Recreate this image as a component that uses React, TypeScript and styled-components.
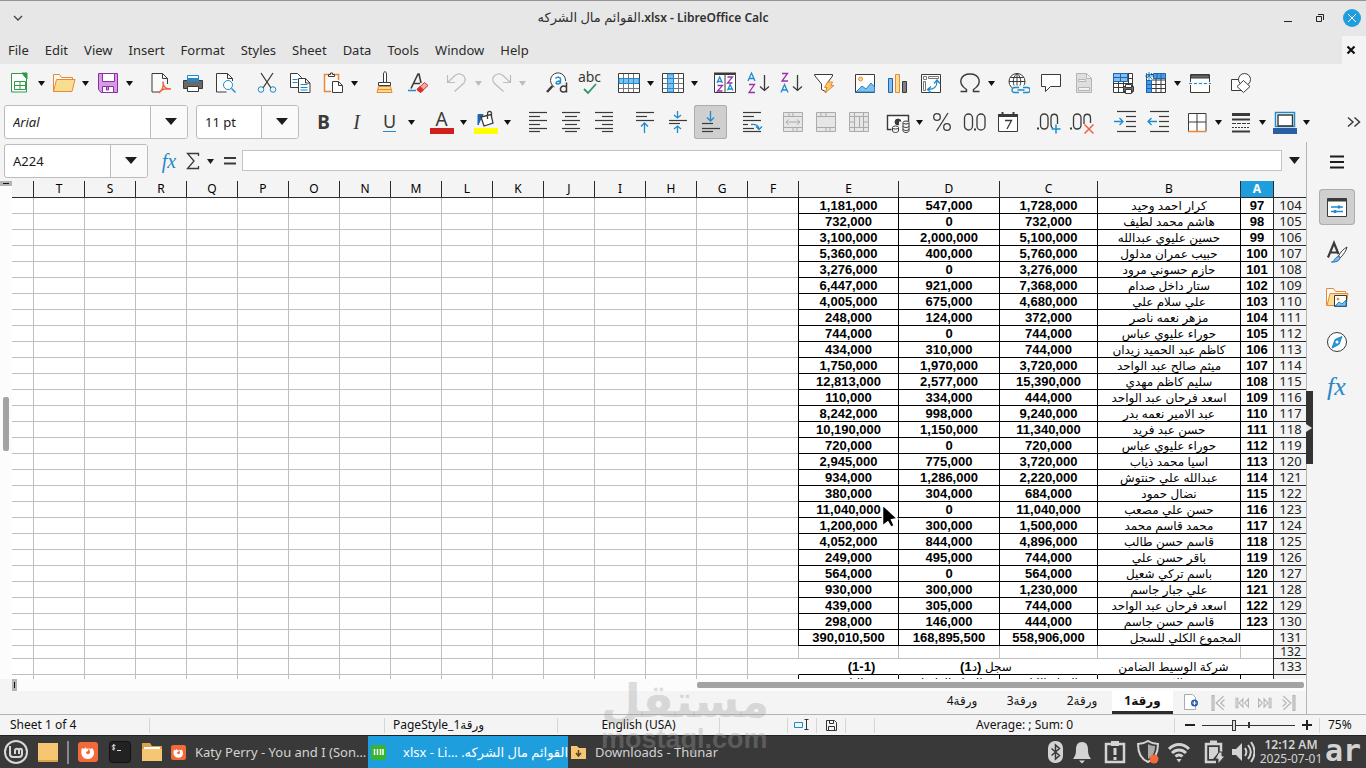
import React from 'react';
import styled, { createGlobalStyle, css } from 'styled-components';

const ui = `"Noto Sans", "DejaVu Sans", sans-serif`;
const INK = '#3a3a38';
const BLUE = '#1e8bcd';
const SKY = '#83beec';
const GREY = '#bdbdbd';
const ORANGE = '#ed8733';

const Global = createGlobalStyle`
  *, *::before, *::after { box-sizing: border-box; }
  body { margin: 0; background: #f4f4f4; color: #1c1c1c; font-family: ${ui}; font-size: 13px; }
  button, input { font: inherit; color: inherit; }
  button { margin: 0; padding: 0; border: 0; background: none; }
`;

/* ---------- icons ---------- */

type IconProps = { children: React.ReactNode; size?: number; color?: string };
const Icon = ({ children, size = 24, color = INK }: IconProps) => (
  <svg width={size} height={size} viewBox="0 0 24 24" fill="none" stroke={color} strokeWidth="1" aria-hidden="true">
    {children}
  </svg>
);

const alignLines = (rows: number[][]) => rows.map(([x, y, w]) => <path key={y} d={`M${x} ${y}.5h${w}`} strokeWidth="1.2" />);
const pageShape = 'M4.5 2.5h10l5 5v14h-15zM14.5 2.5v5h5';

const icons: Record<string, React.ReactNode> = {
  newSheet: (
    <Icon color="#2e9b48"><path d="M3.500 2.500h11l4 5v13.500h-15z" fill="#fff" /><path d="M14 2h5v6z" fill="#2e9b48" /><path d="M6.500 10.500h11v8h-11zM6.500 14.500h11M12 10.500v8" /></Icon>
  ),
  open: (
    <Icon color={ORANGE}><path d="M1.500 20.500V3.500h6l2 3h11v4" fill="#fafafa" /><path d="M1.500 20.500l3-12h18.500l-3 12z" fill="#f9dd91" /></Icon>
  ),
  save: (
    <Icon color="#8c2fa3"><path d="M2.500 2.500h19v19H5l-2.500-3z" fill="#d79ae6" /><path d="M6.500 2.500h12v8h-12z" fill="#fff" /><path d="M6.500 21.500v-6h11v6zM10.500 16v3h2v-3" fill="#fff" /></Icon>
  ),
  pdf: (
    <Icon><path d="M19.500 13V7.500l-5-5h-10.500v18.500h8M14.500 2.500v5h5" fill="#fafafa" /><path d="M15 10.500c1 5 0 8-4 11.500M15.500 14c2 4 4 4 7.500 4M12 20c3-2 7-2.500 10-2" stroke="#f0623c" strokeWidth="1.500" /></Icon>
  ),
  print: (
    <Icon><path d="M2.500 9.500h19v8h-19z" fill="#696969" /><path d="M6.500 10V4.500h11V10z" fill="#fff" stroke={BLUE} /><path d="M6 7h12v3H6z" fill={BLUE} stroke="none" /><path d="M6.500 15.500h11v5h-11z" fill="#fff" /></Icon>
  ),
  preview: (
    <Icon><path d="M18.500 10V7.500l-5-5H2.500v18.500h10M13.500 2.500v5h5" fill="#fafafa" /><circle cx="14" cy="14" r="4.500" stroke={BLUE} fill="#fff" /><path d="M17.500 17.500l4 4" stroke={BLUE} strokeWidth="1.500" /></Icon>
  ),
  cut: (
    <Icon><path d="M6 2l10 15M18 2L8 17" strokeWidth="1.300" /><circle cx="6" cy="18.500" r="2.800" stroke={BLUE} /><circle cx="18" cy="18.500" r="2.800" stroke={BLUE} /></Icon>
  ),
  copy: (
    <Icon><path d="M2.500 2.500h7l4 4v10h-11z" fill="#fff" /><path d="M4.500 8.500h5M4.500 11.500h5" stroke={BLUE} /><path d="M10.500 7.500h7l4.500 4.500v9.500H10.500zM17.500 7.500v4.500H22" fill="#fff" /><path d="M12.500 13.500h7M12.500 16.500h7M12.500 19h7" stroke={BLUE} /></Icon>
  ),
  paste: (
    <Icon><path d="M10 20.500H3.500v-17h14V9" fill="#fafafa" stroke={ORANGE} strokeWidth="1.500" /><path d="M7.500 5.500v-2h2v-1.500h2v1.500h2v2z" fill="#fff" /><path d="M11.500 10.500h6l4 4v7h-10zM17.500 10.500v4h4" fill="#fff" /></Icon>
  ),
  brush: (
    <Icon><path d="M10.500 11V3c0-3 3-3 3 0v8M5.500 11.500h12v3h-12z" fill="#fff" /><path d="M5.500 15.500h12l1.500 6H4zM5 18.500h13" fill="#f9dd91" stroke={ORANGE} /></Icon>
  ),
  clear: (
    <Icon><path d="M5 17.500L12 3h1l2 9M8 12.500h6" strokeWidth="1.600" /><path d="M2 19.500h8" stroke={BLUE} strokeWidth="1.500" /><path d="M11 18.500l7.500-7 3.500 3-7.500 7z" fill="#f2aaa5" stroke="#d6302a" /><path d="M11 18.500l3-3 3.500 3.500-3 2.500z" fill="#d6302a" stroke="#d6302a" /></Icon>
  ),
  undo: <Icon color={GREY}><path d="M2.500 4v7.500H10M3 11l7-6.500c5-4 13 1 9 7.500L9.500 20.500" strokeWidth="1.200" /></Icon>,
  redo: <Icon color={GREY}><path d="M21.500 4v7.500H14M21 11l-7-6.500C9 .500 1 5.500 5 12l9.500 8.500" strokeWidth="1.200" /></Icon>,
  find: (
    <Icon><path d="M20.500 10a7.500 7.500 0 1 0-11 6" fill="#fff" /><path d="M7.500 15L2 21" strokeWidth="2.500" /><path d="M10.500 7.500c1-2 5-1.500 5 .500v4.500M15.500 10c-4-.500-6 3-3 3s3-2 3-3" stroke={BLUE} strokeWidth="1.500" /><path d="M21.500 11.500v10M21.500 16c-5-2.500-6.500 1-6 3s4 3 6 .500" strokeWidth="1.500" /></Icon>
  ),
  rowTable: (
    <Icon><path d="M1.500 2.500h21v19h-21z" fill="#fff" /><path d="M6.500 3v18M11.500 3v18M16.500 3v18M2 17.500h20" stroke="#777" /><path d="M2 7.500h20v5H2z" fill={SKY} stroke={BLUE} /><path d="M6.500 8v4M11.500 8v4M16.500 8v4" stroke={BLUE} /></Icon>
  ),
  colTable: (
    <Icon><path d="M1.500 2.500h21v19h-21z" fill="#fff" /><path d="M2 7.500h20M2 12.500h20M2 17.500h20M17.500 3v18" stroke="#777" /><path d="M6.500 3h6v18h-6z" fill={SKY} stroke={BLUE} /><path d="M7 7.500h5M7 12.500h5M7 17.500h5" stroke={BLUE} /></Icon>
  ),
  sort: (
    <Icon><path d="M1.500 3.500h21v18h-21zM12 3v18" fill="#fff" /><path d="M1 2.500h22" strokeWidth="2" /><path d="M4 12l2.700-6 2.700 6M5 10.500h3.500M14.500 19.500l2.700-6 2.700 6M15.500 18h3.500" stroke={BLUE} strokeWidth="1.300" /><path d="M14.500 6h5l-5 6h5M4.500 14.500h5l-5 5.500h5" stroke="#9b2fae" strokeWidth="1.300" /></Icon>
  ),
  sortAsc: (
    <Icon><path d="M2 10l3.500-8L9 10M3 7.500h5" stroke={BLUE} strokeWidth="1.300" /><path d="M3 13.500h5.500L3 21.500h6" stroke="#9b2fae" strokeWidth="1.300" /><path d="M18.500 4v15.500M14 15.500l4.500 4 4.500-4" strokeWidth="1.300" /></Icon>
  ),
  sortDesc: (
    <Icon><path d="M3 2.500h5.500L3 10h6" stroke="#9b2fae" strokeWidth="1.300" /><path d="M2 21.500l3.500-8 3.500 8M3 19h5" stroke={BLUE} strokeWidth="1.300" /><path d="M18.500 4v15.500M14 15.500l4.500 4 4.500-4" strokeWidth="1.300" /></Icon>
  ),
  filter: (
    <Icon><path d="M2.500 3.500h18v1.500l-6 8V21l-5-2.500V13L3 5z" fill="#fff" /><path d="M15.500 11h5l-1.500 3.500h3L13 22l2-5.500h-2.500z" fill="#f9c96a" stroke={ORANGE} /></Icon>
  ),
  image: (
    <Icon><path d="M2.500 3.500h19v18h-19z" fill="#fff" /><circle cx="7.500" cy="8" r="2" fill="#f9dd91" stroke={ORANGE} /><path d="M3 21l6-6 4 3 5-6 3.500 4v5z" fill={SKY} stroke={BLUE} /></Icon>
  ),
  chart: (
    <Icon><path d="M2.500 7.500h4v14h-4z" fill={SKY} stroke="#1b66b2" /><path d="M9.500 3.500h4v18h-4z" fill="#f9dd91" stroke={ORANGE} /><path d="M16.500 10.500h4v11h-4z" fill="#808080" /></Icon>
  ),
  pivot: (
    <Icon><path d="M2.500 3.500h19v18h-19z" fill="#fff" /><path d="M4.500 5.500h3v3h-3zM9.500 5.500h10v2h-10zM4.500 10.500h2v9h-2z" stroke="#777" /><path d="M9 18.500c7 0 9-3 9-8.500M12 15.500l-3.500 3 3.500 3M15 12.500l3-3.500 3 3.500" stroke={BLUE} strokeWidth="1.300" /></Icon>
  ),
  omega: <Icon><path d="M2.500 20.500h6v-2C-1.500 12 3 3 12 3s13.500 9 3.500 15.500v2h6" strokeWidth="1.400" /></Icon>,
  link: (
    <Icon><circle cx="11" cy="10.500" r="8" fill="#fff" /><path d="M3 10.500h16M4.500 6.500h13M11 2.500v16M11 2.500c-5 4-5 12 0 16M11 2.500c5 4 5 12 0 16" /><path d="M6 14.500h18v8H6z" fill="#f4f4f4" stroke="none" /><path d="M13 21.500H8.500a2.500 2.500 0 0 1 0-5H13M17 16.500h4.500a2.500 2.500 0 0 1 0 5H17M11.500 19h7" stroke={BLUE} strokeWidth="1.300" /></Icon>
  ),
  comment: <Icon><path d="M2.500 3.500h19v12h-10l-5 5v-5h-4z" fill="#fff" /></Icon>,
  headerFooter: (
    <Icon color="#b5b5b5"><path d={pageShape} fill="#dedede" /><path d="M6.500 8.500h7v2h-7zM6.500 16.500h11v3h-11z" fill="#f2f2f2" /></Icon>
  ),
  printArea: (
    <Icon><path d="M2.500 2.500h19v19h-19zM2.500 12.500h19M2.500 16.500h19M7.500 3v18M12.500 3v18M17.500 3v18M17 7.500h4" fill="#fff" /><path d="M2.500 2.500h14v8h-14zM9.500 3v7M3 6.500h13" fill={SKY} stroke="#1b66b2" /><path d="M12.500 15.500h10v5h-10z" fill="#696969" /><path d="M14.500 13.500h6v3h-6zM14.500 18.500h6v4h-6z" fill="#fff" stroke={INK} /></Icon>
  ),
  freeze: (
    <Icon><path d="M2.500 3.500h19v18h-19zM7.500 9h14M7.500 13.500h14M7.500 17.500h14M12 8v13.500M17 8v13.500" fill="#fff" /><path d="M9.500 2.500h12v5h-12zM2.500 9.500h5v12h-5zM13 2.500v5M17 2.500v5M2.500 13.500h5M2.500 17.500h5" fill="#4a9be0" stroke="#1b66b2" /><path d="M5 1v8M1 5h8M2 2l6 6M8 2l-6 6" stroke={BLUE} /></Icon>
  ),
  split: (
    <Icon><path d="M2.500 3.500h19v18h-19z" fill="#fff" /><path d="M3 4h18v3H3z" fill="#696969" /><path d="M1 12.500h22" stroke="#f4f4f4" strokeWidth="3" /><path d="M1 12.500h22" stroke={BLUE} strokeDasharray="3 2" /></Icon>
  ),
  shapes: (
    <Icon><path d="M2.500 8.500h11v11h-11z" fill="#fff" /><circle cx="15.500" cy="8.500" r="6" fill="#fff" /><path d="M14.500 9.500l6.500 6-6.500 6-6.500-6z" fill="#fff" /></Icon>
  ),
  fill: (
    <Icon><path d="M4 15V4.500h5l-2 4z" fill="#1b66b2" stroke="#1b66b2" /><path d="M7 7l10-2.500 2 8.500-9 3zM13.500 9V4c0-3.500 4-3.500 4 0v3" fill="#fff" strokeWidth="1.300" /><path d="M0 18h24v6H0z" fill="#ffff00" stroke="none" /></Icon>
  ),
  left: <Icon>{alignLines([[3, 2, 18], [3, 6, 11], [3, 10, 18], [3, 14, 11], [3, 18, 18], [3, 21, 11]])}</Icon>,
  center: <Icon>{alignLines([[3, 2, 18], [6, 6, 12], [3, 10, 18], [6, 14, 12], [3, 18, 18], [6, 21, 12]])}</Icon>,
  right: <Icon>{alignLines([[3, 2, 18], [10, 6, 11], [3, 10, 18], [10, 14, 11], [3, 18, 18], [10, 21, 11]])}</Icon>,
  top: <Icon>{alignLines([[3, 2, 18], [3, 6, 11], [3, 10, 18]])}<path d="M11.500 23V13M8 16.500l3.500-3.500 3.500 3.500" stroke={BLUE} strokeWidth="1.300" /></Icon>,
  middle: <Icon>{alignLines([[3, 10, 18], [3, 13, 11]])}<path d="M11.500 1v7M8 5l3.500 3L15 5M11.500 23v-7M8 19l3.500-3 3.500 3" stroke={BLUE} strokeWidth="1.300" /></Icon>,
  bottom: <Icon>{alignLines([[3, 13, 11], [3, 18, 18], [3, 21, 11]])}<path d="M11.500 1v10M8 7.500l3.500 3.500L15 7.500" stroke={BLUE} strokeWidth="1.300" /></Icon>,
  wrap: <Icon>{alignLines([[3, 2, 18], [3, 6, 11], [3, 10, 18], [3, 14, 5], [3, 18, 11], [3, 21, 18]])}<path d="M11 14.500c5-.500 8 1 8 5M16 16.500l3 3 3-3" stroke={BLUE} strokeWidth="1.300" /></Icon>,
  merge: <Icon color="#ababab"><path d="M2.500 2.500h19v19h-19zM2.500 6.500h19M2.500 17.500h19M12 2.500v4M12 17.500v4M8 2.500v4M16 17.500v4M5 12h14M8 9.500L5 12l3 2.500M16 9.500l3 2.500-3 2.500" fill="#e6e6e6" /></Icon>,
  mergeCells: <Icon color="#ababab"><path d="M2.500 2.500h19v19h-19zM2.500 6.500h19M2.500 17.500h19M12 2.500v4M12 17.500v4M7 2.500v4M16 17.500v4" fill="#e6e6e6" /></Icon>,
  unmerge: <Icon color="#ababab"><path d="M2.500 2.500h19v19h-19zM2.500 6.500h19M2.500 17.500h19M7.500 2.500v19M12.500 6.500v11M16.500 2.500v19M2.500 12h5M16.500 12h5" fill="#e6e6e6" /></Icon>,
  currency: (
    <Icon><path d="M1.500 5.500h21v14h-21z" fill="#fff" strokeWidth="1.400" /><circle cx="12" cy="12" r="3" fill={INK} /><path d="M13 11.500h10.500v11H13zM5.500 15.500h8v7h-8z" fill="#f4f4f4" stroke="none" /><ellipse cx="9.500" cy="17.500" rx="3" ry="1.500" fill="#fff" /><ellipse cx="20" cy="12.500" rx="3" ry="1.500" /><path d="M6.500 18v3c1 2 5 2 6 0v-3M17 13v8c1 2 5 2 6 0v-8M17 16c1 2 5 2 6 0M17 19c1 2 5 2 6 0" /></Icon>
  ),
  percent: <Icon><circle cx="7" cy="7" r="3.300" strokeWidth="1.300" /><circle cx="17" cy="17" r="3.300" strokeWidth="1.300" /><path d="M18 3L6.500 21" strokeWidth="1.300" /></Icon>,
  number: <Icon><rect x="1.500" y="4" width="8" height="16" rx="4" strokeWidth="1.300" /><rect x="14" y="4" width="8" height="16" rx="4" strokeWidth="1.300" /><path d="M11 19.500h2" strokeWidth="2" /></Icon>,
  date: <Icon><path d="M2.500 4.500h19v17h-19z" fill="#fff" /><path d="M2 5.500h20" strokeWidth="3" /><path d="M6.500 2v3M17.500 2v3" strokeWidth="2" /><path d="M9 10.500h6.500L11 19" strokeWidth="1.300" /></Icon>,
  addDecimal: <Icon><rect x="3.500" y="4" width="7.500" height="15" rx="3.700" strokeWidth="1.300" /><path d="M20.500 14V8c0-5-6.500-5-6.500 0v7c0 2 1 3 2 3.500" strokeWidth="1.300" /><path d="M0 18.500h2" strokeWidth="2" /><path d="M19 14.500v9M14.500 19h9" stroke={BLUE} strokeWidth="1.500" /></Icon>,
  delDecimal: <Icon><rect x="3.500" y="4" width="7.500" height="15" rx="3.700" strokeWidth="1.300" /><path d="M20.500 13V8c0-5-6.500-5-6.500 0v6" strokeWidth="1.300" /><path d="M0 18.500h2" strokeWidth="2" /><path d="M14.500 14.500l9 9M23.500 14.500l-9 9" stroke="#f0623c" strokeWidth="1.500" /></Icon>,
  indent: <Icon>{alignLines([[4, 1, 19], [13, 6, 10], [13, 11, 10], [13, 16, 10], [4, 21, 19]])}<path d="M1 11.500h9M6.500 8l3.500 3.500L6.500 15" stroke={BLUE} strokeWidth="1.300" /></Icon>,
  outdent: <Icon>{alignLines([[4, 1, 19], [13, 6, 10], [13, 11, 10], [13, 16, 10], [4, 21, 19]])}<path d="M11 11.500H2M5.500 8L2 11.500 5.500 15" stroke={BLUE} strokeWidth="1.300" /></Icon>,
  borders: <Icon><path d="M3.500 21V3.500h17.500V21M12 3.500v18M3.500 12h17.500" fill="#fff" /><path d="M3 21.500h18.500" stroke={ORANGE} strokeWidth="1.500" /></Icon>,
  lineStyle: <Icon><path d="M3 4.500h18" strokeWidth="3" /><path d="M3 9.500h18" strokeWidth="2" /><path d="M3 13.500h18" strokeDasharray="4 1" /><path d="M3 17.500h18" strokeDasharray="2 1" /><path d="M3 21.500h18" strokeWidth="2" /></Icon>,
  borderColor: <Icon><path d="M2.500 2.500h19v14h-19z" fill="#fff" stroke={BLUE} strokeWidth="1.500" /><path d="M5 5h14.500v11H5z" strokeWidth="1.400" /><path d="M0 18h24v6H0z" fill="#2a5fa5" stroke="none" /></Icon>,
  more: <Icon><path d="M6 7.500l5 4.500-5 4.500M12.500 7.500l5 4.500-5 4.500" strokeWidth="1.500" /></Icon>,
  sigma: <Icon><path d="M17.500 7V4.500H6.500l6.500 7.500-6.500 7.500h11V17" strokeWidth="1.300" /></Icon>,
  equals: <Icon><path d="M6 9h12M6 14.500h12" strokeWidth="2" /></Icon>,
  menu: <Icon color="#1c1c1c"><path d="M5 6.500h14M5 12h14M5 17.500h14" strokeWidth="2" /></Icon>,
  properties: <Icon><path d="M2.500 3.500h19v18h-19z" fill="#fff" /><path d="M2.500 5h19" strokeWidth="3" /><path d="M6 12h12M6 16.500h12" stroke={BLUE} strokeWidth="1.300" /><path d="M14 10.500v3M10 15v3" stroke={BLUE} strokeWidth="2.500" /></Icon>,
  styles: <Icon><path d="M3 17.500L9 3l4.500 11M5 12.500h8" strokeWidth="2.200" /><path d="M13.500 16c2-4 5-7 8.500-9-1 4-3 7-6.500 10.500z" fill="#fff" /><path d="M6.500 22c3 .500 3-5 7-5.500 3 1 1 6-7 5.500z" fill={SKY} stroke="#1b66b2" /></Icon>,
  gallery: <Icon color={ORANGE}><path d="M1.500 20.500V3.500h7l2 3h10v3" fill="#fff" /><path d="M2 20.500l3-12h18l-2 12z" fill="#f9dd91" /><path d="M9.500 10.500h12v11h-12z" fill="#fff" stroke={INK} /><path d="M10 21l4-4 3 2 4-4v6z" fill={SKY} stroke={BLUE} /><circle cx="13" cy="14" r="1" fill={ORANGE} /></Icon>,
  navigator: <Icon><circle cx="12" cy="12" r="9.500" fill="#fff" /><path d="M17 6.500l-3 8-7 3.500 3-8.500z" fill="#3193dc" stroke={BLUE} /><circle cx="12" cy="12" r="1.500" fill="#fff" stroke="none" /></Icon>,
};

const Caret = ({ color = '#1c1c1c', w = 7 }: { color?: string; w?: number }) => (
  <svg width={w} height={w > 8 ? 7 : 5} viewBox="0 0 8 5" preserveAspectRatio="none" aria-hidden="true"><path d="M0 0h8L4 5z" fill={color} /></svg>
);

/* ---------- window frame ---------- */

const Window = styled.div`
  display: flex;
  flex-direction: column;
  position: relative;
  height: 100vh;
  overflow: hidden;
`;
const TitleBar = styled.header`
  display: flex;
  align-items: center;
  flex: none;
  height: 36px;
  padding: 0 5px 2px 9px;
  border-top: 1px solid #949494;
  background: #e7e7e7;
`;
const Title = styled.h1`
  flex: 1;
  margin: 0;
  text-align: center;
  font-size: 12px;
  font-weight: 600;
  line-height: 20px;
  color: #303030;
`;
const TitleArabic = styled.span`
  font-size: 13px;
  font-weight: 400;
`;
const WindowControls = styled.div`
  display: flex;
  align-items: center;
  gap: 14px;
`;
const RoundButton = styled.button<{ $close?: boolean }>`
  display: grid;
  place-items: center;
  width: 18px;
  height: 18px;
  border-radius: 9px;
  background: ${(p) => (p.$close ? '#1f9ede' : 'transparent')};
`;
const MenuBar = styled.nav`
  display: flex;
  flex: none;
  height: 28px;
  padding-left: 8px;
  gap: 16px;
  align-items: center;
  background: #e7e7e7;
`;
const MenuLink = styled.button`
  line-height: 20px;
  color: #2b2b2b;
`;
const DocClose = styled.button`
  align-self: stretch;
  width: 24px;
  padding-right: 6px;
  margin-left: auto;
  background: #f4f4f4;
  display: grid;
  place-items: center;
`;

/* ---------- toolbars ---------- */

const ToolBar = styled.div`
  display: flex;
  flex: none;
  align-items: center;
  height: 39px;
  padding: 0 0 2px 3px;
`;
const ToolButton = styled.button<{ $on?: boolean }>`
  display: grid;
  place-items: center;
  flex: none;
  width: 33px;
  height: 34px;
  border-radius: 3px;
  ${(p) => p.$on && css`background: #cfcfcf; box-shadow: inset 0 0 0 1px #adadad;`}
`;
const DropButton = styled.button`
  display: grid;
  place-items: center;
  flex: none;
  width: 11px;
  height: 30px;
  padding-top: 2px;
`;
const Gap = styled.span<{ $w: number }>`
  flex: none;
  width: ${(p) => p.$w}px;
`;
const Spring = styled.span`
  flex: 1;
`;
const Letter = styled.span<{ $kind: 'bold' | 'italic' | 'under' | 'color' }>`
  color: ${INK};
  ${(p) => p.$kind === 'bold' && css`font-size: 19px; font-weight: 700; line-height: 24px;`}
  ${(p) => p.$kind === 'italic' && css`font-family: "Liberation Serif", serif; font-style: italic; font-size: 20px; line-height: 24px;`}
  ${(p) => p.$kind === 'under' && css`font-size: 18px; line-height: 19px; border-bottom: 1px solid ${BLUE};`}
  ${(p) => p.$kind === 'color' && css`width: 24px; text-align: center; font-size: 19px; line-height: 18px; border-bottom: 6px solid #cf211c;`}
`;
const Spelling = styled.span`
  display: grid;
  justify-items: center;
  font-size: 14px;
  line-height: 12px;
  color: ${INK};
`;
const FunctionMark = styled.span<{ $size: number }>`
  font-family: "Liberation Serif", serif;
  font-style: italic;
  font-size: ${(p) => p.$size}px;
  line-height: 24px;
  color: #2c87c7;
`;
const Combo = styled.label<{ $w: number }>`
  display: flex;
  flex: none;
  width: ${(p) => p.$w}px;
  height: 34px;
  margin-left: 1px;
  border: 1px solid #bcbcbc;
  border-radius: 3px;
  background: #fff;
  overflow: hidden;
`;
const ComboInput = styled.input<{ $italic?: boolean }>`
  flex: 1;
  min-width: 0;
  padding: 0 8px;
  border: 0;
  outline: 0;
  background: none;
  font-style: ${(p) => (p.$italic ? 'italic' : 'normal')};
`;
const ComboArrow = styled.button`
  display: grid;
  place-items: center;
  width: 37px;
  padding-left: 4px;
  border-left: 1px solid #bcbcbc;
  background: #fafafa;
`;

type Tool = string | number;
/* "v" is a drop-down arrow, "-" a dimmed one, a number is a space between groups */
const standardTools: Tool[] = [
  'newSheet', 'v', 'open', 'v', 'save', 'v', 8, 'pdf', 'print', 'preview', 8, 'cut', 'copy', 'paste', 'v', 8,
  'brush', 'clear', 6, 'undo', '-', 'redo', '-', 12, 'find', 'spelling', 6, 'rowTable', 'v', 'colTable', 'v', 8,
  'sort', 'sortAsc', 'sortDesc', 'filter', 8, 'image', 'chart', 'pivot', 6, 'omega', 'v', 4, 'link', 'comment',
  'headerFooter', 6, 'printArea', 'freeze', 'v', 'split', 8, 'shapes',
];
const formatTools: Tool[] = [
  8, 'bold', 'italic', 'under', 'v', 8, 'color', 'v', 'fill', 'v', 8, 'left', 'center', 'right', 8, 'top', 'middle',
  'bottom', 8, 'wrap', 8, 'merge', 'mergeCells', 'unmerge', 6, 'currency', 'v', 'percent', 'number', 'date', 8,
  'addDecimal', 'delDecimal', 10, 'indent', 'outdent', 6, 'borders', 'v', 'lineStyle', 'v', 'borderColor', 'v',
];

const glyphs: Record<string, React.ReactNode> = {
  ...icons,
  bold: <Letter $kind="bold">B</Letter>,
  italic: <Letter $kind="italic">I</Letter>,
  under: <Letter $kind="under">U</Letter>,
  color: <Letter $kind="color">A</Letter>,
  spelling: (
    <Spelling>
      abc
      <svg width="16" height="12" viewBox="0 0 16 12" aria-hidden="true"><path d="M2 6l4 4 8-9" fill="none" stroke="#30956a" strokeWidth="1.800" /></svg>
    </Spelling>
  ),
};

const Tools = ({ items, active }: { items: Tool[]; active?: string }) => (
  <>
    {items.map((t, i) => {
      if (typeof t === 'number') return <Gap key={i} $w={t} />;
      if (t === 'v' || t === '-') return <DropButton key={i} aria-label="More options"><Caret color={t === '-' ? GREY : '#111'} /></DropButton>;
      return <ToolButton key={i} aria-label={t} $on={t === active}>{glyphs[t]}</ToolButton>;
    })}
  </>
);

/* ---------- body ---------- */

const Body = styled.div`
  display: flex;
  flex: 1;
  min-height: 0;
`;
const Main = styled.main`
  display: flex;
  flex-direction: column;
  flex: 1;
  min-width: 0;
`;
const SmallTool = styled.button`
  display: grid;
  place-items: center;
  flex: none;
  width: 24px;
  height: 24px;
`;
const FormulaInput = styled.input`
  flex: 1;
  min-width: 0;
  height: 21px;
  border: 1px solid #c4c4c4;
  outline: 0;
  background: #fff;
`;
const SheetArea = styled.div`
  display: flex;
  flex: 1;
  min-height: 0;
`;
const VScroll = styled.div`
  display: flex;
  flex-direction: column;
  align-items: center;
  flex: none;
  width: 12px;
  background: #fcfcfc;
`;
const SplitHandle = styled.span<{ $side?: boolean }>`
  display: grid;
  place-items: center;
  flex: none;
  width: ${(p) => (p.$side ? '5px' : '12px')};
  height: ${(p) => (p.$side ? '12px' : '5px')};
  background: #b5b5b5;
  &::after {
    content: '';
    width: ${(p) => (p.$side ? '1px' : '6px')};
    height: ${(p) => (p.$side ? '6px' : '1px')};
    background: #111;
  }
`;
const VThumb = styled.span`
  width: 6px;
  height: 54px;
  margin-top: 211px;
  border-radius: 2px;
  background: #a3a3a3;
`;
const GridView = styled.div`
  flex: 1;
  min-width: 0;
  overflow: hidden;
  background: #fff;
`;
const Grid = styled.table`
  width: 1324px;
  table-layout: fixed;
  border-collapse: separate;
  border-spacing: 0;
`;
const Corner = styled.th`
  width: 33px;
  height: 17px;
  padding: 0;
  border-bottom: 1px solid #2b2b2b;
  border-left: 1px solid #2b2b2b;
  background: #f4f4f4;
`;
const ColHead = styled.th<{ $w: number; $on?: boolean }>`
  width: ${(p) => p.$w}px;
  height: 17px;
  padding: 0;
  border-left: 1px solid #2b2b2b;
  border-bottom: 1px solid #2b2b2b;
  background: ${(p) => (p.$on ? '#1f9ede' : '#f4f4f4')};
  color: ${(p) => (p.$on ? '#fff' : '#000')};
  font-size: 12px;
  font-weight: ${(p) => (p.$on ? 700 : 400)};
  line-height: 16px;
`;
const RowHead = styled.th<{ $h: number }>`
  height: ${(p) => p.$h}px;
  padding: 0 0 0 1px;
  border-left: 1px solid #2b2b2b;
  border-bottom: 1px solid #2b2b2b;
  background: #f4f4f4;
  color: #222;
  font-size: ${(p) => (p.$h > 13 ? 13 : 12)}px;
  font-weight: 400;
  line-height: ${(p) => p.$h - 1}px;
`;
type Edge = 'ink' | 'light' | 'none';
const edgeColor = { ink: '#000', light: '#bfbfbf', none: 'transparent' };
const Cell = styled.td<{ $left?: Edge; $bottom?: Edge; $arabic?: boolean; $shift?: 'left' | 'right' }>`
  padding: 0;
  ${(p) => p.$shift === 'left' && css`padding-right: 24px;`}
  ${(p) => p.$shift === 'right' && css`padding-left: 26px;`}
  border-left: 1px solid ${(p) => edgeColor[p.$left ?? 'light']};
  border-bottom: 1px solid ${(p) => edgeColor[p.$bottom ?? 'light']};
  text-align: center;
  color: #000;
  font-family: "Liberation Sans", "DejaVu Sans", sans-serif;
  font-size: ${(p) => (p.$arabic ? 12 : 13)}px;
  font-weight: ${(p) => (p.$arabic ? 400 : 700)};
  line-height: ${(p) => (p.$arabic ? 17 : 16)}px;
`;
const CellText = styled.div`
  height: 15px;
  overflow: hidden;
  white-space: nowrap;
`;
const SmallArabic = styled.span`
  font-size: 12px;
  font-weight: 400;
`;

const widths: Record<string, number> = { A: 33, B: 143, C: 98, D: 101, E: 100 };
const dataCols = ['A', 'B', 'C', 'D', 'E'];
const emptyCols = 'FGHIJKLMNOPQRST'.split('').concat('');

const people: [string, string, string, string][] = [
  ['كرار احمد وحيد', '1,728,000', '547,000', '1,181,000'],
  ['هاشم محمد لطيف', '732,000', '0', '732,000'],
  ['حسين عليوي عبدالله', '5,100,000', '2,000,000', '3,100,000'],
  ['حبيب عمران مدلول', '5,760,000', '400,000', '5,360,000'],
  ['حازم حسوني مرود', '3,276,000', '0', '3,276,000'],
  ['ستار داخل صدام', '7,368,000', '921,000', '6,447,000'],
  ['علي سلام علي', '4,680,000', '675,000', '4,005,000'],
  ['مزهر نعمه ناصر', '372,000', '124,000', '248,000'],
  ['حوراء عليوي عباس', '744,000', '0', '744,000'],
  ['كاظم عبد الحميد زيدان', '744,000', '310,000', '434,000'],
  ['ميثم صالح عبد الواحد', '3,720,000', '1,970,000', '1,750,000'],
  ['سليم كاظم مهدي', '15,390,000', '2,577,000', '12,813,000'],
  ['اسعد فرحان عبد الواحد', '444,000', '334,000', '110,000'],
  ['عبد الامير نعمه بدر', '9,240,000', '998,000', '8,242,000'],
  ['حسن عبد فريد', '11,340,000', '1,150,000', '10,190,000'],
  ['حوراء عليوي عباس', '720,000', '0', '720,000'],
  ['اسيا محمد ذياب', '3,720,000', '775,000', '2,945,000'],
  ['عبدالله علي حنتوش', '2,220,000', '1,286,000', '934,000'],
  ['نضال حمود', '684,000', '304,000', '380,000'],
  ['حسن علي مصعب', '11,040,000', '0', '11,040,000'],
  ['محمد قاسم محمد', '1,500,000', '300,000', '1,200,000'],
  ['قاسم حسن طالب', '4,896,000', '844,000', '4,052,000'],
  ['باقر حسن علي', '744,000', '495,000', '249,000'],
  ['باسم تركي شعيل', '564,000', '0', '564,000'],
  ['علي جبار جاسم', '1,230,000', '300,000', '930,000'],
  ['اسعد فرحان عبد الواحد', '744,000', '305,000', '439,000'],
  ['قاسم حسن جاسم', '444,000', '146,000', '298,000'],
];

const Empty = () => <>{emptyCols.map((c, i) => <Cell key={i} />)}</>;

const Spreadsheet = () => (
  <Grid>
    <thead>
      <tr>
        <Corner />
        {dataCols.map((c) => <ColHead key={c} $w={widths[c]} $on={c === 'A'}>{c}</ColHead>)}
        {emptyCols.map((c, i) => <ColHead key={i} $w={51}>{c}</ColHead>)}
      </tr>
    </thead>
    <tbody>
      {people.map(([name, total, paid, rest], i) => (
        <tr key={i}>
          <RowHead $h={16}>{104 + i}</RowHead>
          <Cell $left="ink" $bottom="ink"><CellText>{97 + i}</CellText></Cell>
          <Cell $left="ink" $bottom="ink" $arabic><CellText>{name}</CellText></Cell>
          {[total, paid, rest].map((v, k) => <Cell key={k} $left="ink" $bottom="ink"><CellText>{v}</CellText></Cell>)}
          <Empty />
        </tr>
      ))}
      <tr>
        <RowHead $h={16}>131</RowHead>
        <Cell $left="ink" $bottom="ink" $arabic colSpan={2}><CellText>المجموع الكلي للسجل</CellText></Cell>
        {['558,906,000', '168,895,500', '390,010,500'].map((v) => <Cell key={v} $left="ink" $bottom="ink"><CellText>{v}</CellText></Cell>)}
        <Empty />
      </tr>
      <tr>
        <RowHead $h={13}>132</RowHead>
        {dataCols.map((c) => <Cell key={c} />)}
        <Empty />
      </tr>
      <tr>
        <RowHead $h={16}>133</RowHead>
        <Cell $left="none" $bottom="ink" $arabic $shift="left" colSpan={2}><CellText>شركة الوسيط الضامن</CellText></Cell>
        <Cell $left="none" $bottom="ink" $shift="left" colSpan={2}><CellText><SmallArabic>سجل</SmallArabic> (<SmallArabic>د</SmallArabic>1)</CellText></Cell>
        <Cell $left="none" $bottom="ink" $shift="right"><CellText>(1-1)</CellText></Cell>
        <Empty />
      </tr>
      <tr>
        <RowHead $h={16} />
        {['', 'الاسم', 'المبلغ الكلي', 'المبلغ الواصل', 'الباقي'].map((v, k) => <Cell key={k} $left="ink" $bottom="ink" $arabic><CellText>{v}</CellText></Cell>)}
        <Empty />
      </tr>
    </tbody>
  </Grid>
);

const HScroll = styled.div`
  display: flex;
  align-items: center;
  justify-content: space-between;
  flex: none;
  height: 12px;
  margin-left: 12px;
  padding-right: 2px;
  background: #fcfcfc;
`;
const HThumb = styled.span`
  width: 47%;
  height: 6px;
  border-radius: 2px;
  background: #a3a3a3;
`;
const TabBar = styled.div`
  display: flex;
  flex: none;
  align-items: stretch;
  height: 23px;
  padding-right: 7px;
`;
const SheetTab = styled.button<{ $on?: boolean }>`
  width: ${(p) => (p.$on ? 61 : 60)}px;
  border-bottom: 3px solid ${(p) => (p.$on ? '#2b2b2b' : 'transparent')};
  background: ${(p) => (p.$on ? '#fff' : 'transparent')};
  font-size: 12px;
  font-weight: ${(p) => (p.$on ? 700 : 400)};
  line-height: 18px;
  color: #111;
`;
const TabTools = styled.div`
  display: flex;
  align-items: center;
  padding-bottom: 2px;
`;
const TabTool = styled.button`
  display: grid;
  place-items: center;
  width: 23px;
  height: 20px;
`;

const SideBar = styled.aside`
  position: relative;
  display: flex;
  flex-direction: column;
  align-items: center;
  flex: none;
  width: 60px;
  padding: 2px 0 0 0;
  gap: 9px;
  border-left: 1px solid #b5b5b5;
`;
const SideButton = styled.button<{ $on?: boolean }>`
  display: grid;
  place-items: center;
  flex: none;
  width: 36px;
  height: 36px;
  border-radius: 4px;
  ${(p) => p.$on && css`background: #cfcfcf; box-shadow: inset 0 0 0 1px #adadad;`}
`;
const SideCollapse = styled.button`
  position: absolute;
  left: -1px;
  top: 249px;
  display: grid;
  place-items: center start;
  width: 7px;
  height: 73px;
  background: #333;
`;

/* ---------- status bar ---------- */

const StatusBar = styled.footer`
  display: flex;
  flex: none;
  align-items: center;
  height: 21px;
  border-top: 1px solid #b3b3b3;
  font-size: 12px;
  line-height: 18px;
  color: #111;
`;
const StatusField = styled.div<{ $w?: number; $center?: boolean }>`
  display: flex;
  align-items: center;
  flex: ${(p) => (p.$w ? `0 0 ${p.$w}px` : '1 1 0')};
  min-width: 0;
  justify-content: ${(p) => (p.$center ? 'center' : 'flex-start')};
  height: 15px;
  padding-left: ${(p) => (p.$center ? 0 : 8)}px;
  border-right: 1px solid #d6d6d6;
  white-space: nowrap;
  &:last-child { border-right: 0; }
`;
const ZoomButton = styled.button`
  display: grid;
  place-items: center;
  flex: none;
  width: 14px;
  height: 14px;
`;
const ZoomSlider = styled.input`
  appearance: none;
  flex: 1;
  width: 0;
  min-width: 0;
  height: 12px;
  margin: 0 5px;
  background:
    linear-gradient(#333, #333) 50% 50% / 2px 6px no-repeat,
    linear-gradient(#333, #333) 50% 50% / 100% 1px no-repeat;
  &::-webkit-slider-thumb {
    appearance: none;
    width: 4px;
    height: 11px;
    border: 1px solid #333;
    background: #ddd;
  }
`;

/* ---------- desktop panel ---------- */

const Panel = styled.footer`
  display: flex;
  flex: none;
  align-items: stretch;
  height: 33px;
  border-top: 1px solid #222;
  background: #393939;
  color: #d3d3d3;
`;
const Launcher = styled.button`
  display: grid;
  place-items: center;
  width: 32px;
`;
const PanelDivider = styled.span`
  align-self: center;
  width: 2px;
  height: 23px;
  margin: 0 3px;
  background: #8a8a8a;
`;
const TaskButton = styled.button<{ $on?: boolean }>`
  display: flex;
  align-items: center;
  gap: 9px;
  width: 200px;
  padding-left: 3px;
  overflow: hidden;
  white-space: nowrap;
  line-height: 20px;
  background: ${(p) => (p.$on ? '#1f9ede' : 'transparent')};
  color: ${(p) => (p.$on ? '#fff' : '#d3d3d3')};
`;
const TaskName = styled.span<{ $rtl?: boolean }>`
  flex: 1;
  text-align: ${(p) => (p.$rtl ? 'right' : 'left')};
`;
const Tray = styled.div`
  display: flex;
  align-items: center;
  margin-left: auto;
  padding-right: 3px;
`;
const TrayIcon = styled.button<{ $w: number }>`
  display: grid;
  place-items: center;
  width: ${(p) => p.$w}px;
`;
const Clock = styled.time`
  display: grid;
  justify-items: center;
  width: 64px;
  margin-left: 4px;
  font-size: 12px;
  line-height: 14px;
`;
const ClockTime = styled.strong`
  font-size: 12px;
  font-weight: 600;
`;
const Keyboard = styled.button`
  width: 40px;
  font-family: "DejaVu Sans Mono", monospace;
  font-weight: 700;
  font-size: 30px;
  line-height: 28px;
  padding-bottom: 2px;
  color: #d3d3d3;
`;

const Watermark = styled.div`
  position: absolute;
  left: 601px;
  bottom: 16px;
  width: 164px;
  pointer-events: none;
  text-align: center;
  color: rgba(160, 160, 160, 0.35);
  font-weight: 700;
`;
const WatermarkArabic = styled.div`
  font-family: "DejaVu Sans", sans-serif;
  font-size: 46px;
  line-height: 50px;
`;
const WatermarkLatin = styled.div`
  font-family: "Liberation Sans", sans-serif;
  font-size: 27px;
  line-height: 26px;
`;
const Pointer = styled.svg`
  position: absolute;
  left: 880px;
  top: 503px;
`;

const Fox = ({ size }: { size: number }) => (
  <svg width={size} height={size} viewBox="0 0 20 20" aria-hidden="true">
    <rect width="20" height="20" rx="3" fill="#f4693a" />
    <path d="M4 6l2 1 2-2v2c2-1 3 0 2 2l-2 1c0 3 4 3 4 0 0-2-1-3-2-4l3 1 1-1c4 4 2 11-4 11S2 12 4 6z" fill="#fff" />
  </svg>
);
const Tray24 = ({ children }: { children: React.ReactNode }) => (
  <svg width="24" height="26" viewBox="0 0 24 26" fill="none" stroke="#d3d3d3" strokeWidth="2" aria-hidden="true">{children}</svg>
);

const menus = ['File', 'Edit', 'View', 'Insert', 'Format', 'Styles', 'Sheet', 'Data', 'Tools', 'Window', 'Help'];

export default function App() {
  return (
    <Window>
      <Global />
      <TitleBar>
        <RoundButton aria-label="Window menu">
          <svg width="10" height="6" viewBox="0 0 10 6" aria-hidden="true"><path d="M1 1l4 4 4-4" fill="none" stroke="#444" strokeWidth="1.300" /></svg>
        </RoundButton>
        <Title><TitleArabic>القوائم مال الشركه</TitleArabic>.xlsx - LibreOffice Calc</Title>
        <WindowControls>
          <RoundButton aria-label="Minimize"><svg width="10" height="10"><path d="M1 8.500h8" stroke="#222" /></svg></RoundButton>
          <RoundButton aria-label="Restore"><svg width="10" height="10" fill="none" stroke="#222"><path d="M1.500 3.500h5v5h-5zM3 1.500h5.500V7" /></svg></RoundButton>
          <RoundButton $close aria-label="Close"><svg width="10" height="10" stroke="#fff"><path d="M1 1l8 8M9 1L1 9" /></svg></RoundButton>
        </WindowControls>
      </TitleBar>
      <MenuBar>
        {menus.map((m) => <MenuLink key={m}>{m}</MenuLink>)}
        <DocClose aria-label="Close document"><svg width="10" height="10" stroke="#111" strokeWidth="2.200"><path d="M1.500 1.500l7 7M8.500 1.500l-7 7" /></svg></DocClose>
      </MenuBar>
      <ToolBar><Tools items={standardTools} /></ToolBar>
      <ToolBar>
        <Combo $w={184}>
          <ComboInput aria-label="Font name" defaultValue="Arial" $italic />
          <ComboArrow aria-label="Choose font"><Caret w={12} /></ComboArrow>
        </Combo>
        <Gap $w={7} />
        <Combo $w={103}>
          <ComboInput aria-label="Font size" defaultValue="11 pt" />
          <ComboArrow aria-label="Choose size"><Caret w={12} /></ComboArrow>
        </Combo>
        <Tools items={formatTools} active="bottom" />
        <Spring />
        <SmallTool aria-label="More tools">{icons.more}</SmallTool>
      </ToolBar>
      <Body>
        <Main>
          <ToolBar>
            <Combo $w={144}>
              <ComboInput aria-label="Name box" defaultValue="A224" />
              <ComboArrow aria-label="Named ranges"><Caret w={12} /></ComboArrow>
            </Combo>
            <Gap $w={9} />
            <SmallTool aria-label="Function wizard"><FunctionMark $size={20}>fx</FunctionMark></SmallTool>
            <SmallTool aria-label="Sum">{icons.sigma}</SmallTool>
            <DropButton aria-label="Select function"><Caret /></DropButton>
            <Gap $w={2} />
            <SmallTool aria-label="Formula">{icons.equals}</SmallTool>
            <FormulaInput aria-label="Formula input" />
            <SmallTool aria-label="Expand formula bar"><Caret w={11} /></SmallTool>
          </ToolBar>
          <SheetArea>
            <VScroll><SplitHandle /><VThumb /></VScroll>
            <GridView dir="rtl"><Spreadsheet /></GridView>
          </SheetArea>
          <HScroll><SplitHandle $side /><HThumb /></HScroll>
          <TabBar dir="ltr">
            <Spring />
            <SheetTab dir="rtl">ورقة4</SheetTab>
            <SheetTab dir="rtl">ورقة3</SheetTab>
            <SheetTab dir="rtl">ورقة2</SheetTab>
            <SheetTab dir="rtl" $on>ورقة1</SheetTab>
            <Gap $w={6} />
            <TabTools>
              <TabTool aria-label="Add sheet">
                <svg width="16" height="16" fill="none" stroke="#aaa" aria-hidden="true"><path d="M1.500.500h8l3 3v12h-11z" fill="#fff" /><circle cx="11.500" cy="9" r="3.500" fill="#2a5fa5" stroke="none" /><path d="M9.500 9h4M11.500 7v4" stroke="#fff" /></svg>
              </TabTool>
              <Gap $w={5} />
              <TabTool aria-label="First sheet"><Icon size={22} color="#b5b5b5"><path d="M4.500 4v16h2V4zM17 4.500l-8 7.500 8 7.500M18 8l-4 4 4 4" strokeWidth="1.400" /></Icon></TabTool>
              <TabTool aria-label="Previous sheet"><Icon size={22} color="#b5b5b5"><path d="M5.500 7v10h2V7zM13 7.500L9 12l4 4.500zM19 7.500L15 12l4 4.500z" strokeWidth="1.200" /></Icon></TabTool>
              <TabTool aria-label="Next sheet"><Icon size={22} color="#b5b5b5"><path d="M18.500 7v10h-2V7zM11 7.500l4 4.500-4 4.500zM5 7.500L9 12l-4 4.500z" strokeWidth="1.200" /></Icon></TabTool>
              <TabTool aria-label="Last sheet"><Icon size={22} color="#b5b5b5"><path d="M19.500 4v16h-2V4zM7 4.500l8 7.500-8 7.500M6 8l4 4-4 4" strokeWidth="1.400" /></Icon></TabTool>
            </TabTools>
          </TabBar>
        </Main>
        <SideBar>
          <SideButton aria-label="Sidebar settings">{icons.menu}</SideButton>
          <SideButton aria-label="Properties" $on>{icons.properties}</SideButton>
          <SideButton aria-label="Styles">{icons.styles}</SideButton>
          <SideButton aria-label="Gallery">{icons.gallery}</SideButton>
          <SideButton aria-label="Navigator">{icons.navigator}</SideButton>
          <SideButton aria-label="Functions"><FunctionMark $size={26}>fx</FunctionMark></SideButton>
          <SideCollapse aria-label="Hide sidebar"><svg width="6" height="8"><path d="M0 0l6 4-6 4z" fill="#e8e8e8" /></svg></SideCollapse>
        </SideBar>
      </Body>
      <StatusBar>
        <Gap $w={2} />
        <StatusField $w={148}>Sheet 1 of 4</StatusField>
        <StatusField $w={235} />
        <StatusField $w={173}>PageStyle_ورقة1</StatusField>
        <StatusField $w={162} $center>English (USA)</StatusField>
        <StatusField $w={68} />
        <StatusField $w={29} $center>
          <svg width="16" height="12" fill="none" aria-hidden="true"><path d="M.500 3.500h8v5h-8z" stroke={BLUE} /><path d="M10.500.500h4M10.500 10.500h4M12.500.500v10" stroke="#333" /></svg>
        </StatusField>
        <StatusField $w={29} $center>
          <svg width="11" height="11" fill="none" stroke="#333" aria-hidden="true"><path d="M.500.500h8l2 2v8H.500zM3.500.500v3h4v-3M2.500 10.500v-4h6v4" /></svg>
        </StatusField>
        <StatusField $w={29} />
        <StatusField $center>Average: ; Sum: 0</StatusField>
        <StatusField $w={145}>
          <ZoomButton aria-label="Zoom out"><svg width="10" height="10"><path d="M0 5h10" stroke="#222" strokeWidth="2" /></svg></ZoomButton>
          <ZoomSlider type="range" aria-label="Zoom" min={0} max={100} defaultValue={34} />
          <ZoomButton aria-label="Zoom in"><svg width="10" height="10"><path d="M0 5h10M5 0v10" stroke="#222" strokeWidth="2" /></svg></ZoomButton>
          <Gap $w={5} />
        </StatusField>
        <StatusField $w={46}>75%</StatusField>
      </StatusBar>
      <Panel>
        <Launcher aria-label="Menu">
          <svg width="26" height="26" viewBox="0 0 26 26" fill="none" stroke="#d8d8d8" strokeWidth="2" aria-hidden="true"><circle cx="13" cy="13" r="11" /><path d="M7 7v8c0 2 1 3 3 3h6c2 0 3-1 3-3v-3c0-3-3-3-3 0v3-3c0-3-4-3-4 0v3" /></svg>
        </Launcher>
        <Launcher aria-label="Show desktop"><svg width="20" height="19"><path d="M0 0h20v19H0z" fill="#f7c672" /><path d="M0 17h20v2H0z" fill="#dba24a" /></svg></Launcher>
        <PanelDivider />
        <Launcher aria-label="Firefox"><Fox size={20} /></Launcher>
        <Launcher aria-label="Terminal">
          <svg width="22" height="22" fill="none" aria-hidden="true"><rect x=".5" y=".5" width="21" height="21" rx="3" fill="#222" stroke="#111" /><path d="M6.500 4.500c-4-1-4 1.500-2 2s1.500 2.500-1.500 1.500M4.800 3v6.500M8 9.500h4" stroke="#ddd" /></svg>
        </Launcher>
        <Launcher aria-label="Files">
          <svg width="20" height="18" aria-hidden="true"><path d="M0 0h8l2 3h10v15H0z" fill="#dba24a" /><path d="M2 4h16v4H2z" fill="#fff" /><path d="M0 6h20v12H0z" fill="#f7c672" /></svg>
        </Launcher>
        <TaskButton>
          <Fox size={15} />
          <TaskName>Katy Perry - You and I (Son…</TaskName>
        </TaskButton>
        <TaskButton $on>
          <svg width="15" height="15" aria-hidden="true"><rect width="15" height="15" rx="3" fill="#37b52e" /><path d="M3.500 4v6M6.500 4v6M9.500 4v6M12 4v6" stroke="#fff" strokeWidth="1.500" /></svg>
          <TaskName $rtl dir="rtl">القوائم مال الشركه. <bdi dir="ltr">xlsx - Li…</bdi></TaskName>
        </TaskButton>
        <TaskButton>
          <svg width="15" height="14" aria-hidden="true"><path d="M0 1h6l2 2h7v11H0z" fill="#f7c672" /><path d="M7.500 5v5M5 8l2.500 3L10 8" fill="none" stroke="#5a4520" strokeWidth="1.500" /></svg>
          <TaskName>Downloads - Thunar</TaskName>
        </TaskButton>
        <Tray>
          <TrayIcon $w={26} aria-label="Bluetooth"><Tray24><rect x="5" y="2" width="15" height="22" rx="7" fill="#d3d3d3" stroke="none" /><path d="M8.500 9.500l8 7-4 3.500V6l4 3.500-8 7" stroke="#393939" strokeWidth="1.500" /></Tray24></TrayIcon>
          <TrayIcon $w={28} aria-label="Notifications"><Tray24><path d="M12 3c-5 0-6 4-6 8s-1 6-3 9h18c-2-3-3-5-3-9s-1-8-6-8zM9 21.500h6l-3 3z" fill="#d3d3d3" stroke="none" /></Tray24></TrayIcon>
          <TrayIcon $w={38} aria-label="Reports"><Tray24><path d="M3 5h18v18H3z" strokeWidth="2.500" /><path d="M8 2h8v5H8z" fill="#d3d3d3" stroke="none" /><path d="M12 9v7M12 18v3" strokeWidth="3" /></Tray24></TrayIcon>
          <TrayIcon $w={27} aria-label="Updates"><Tray24><path d="M12 2c3 2 6 3 10 3 0 9-3 15-10 18C5 20 2 14 2 5c4 0 7-1 10-3z" /><path d="M12 5c2 1 4 2 7 2 0 6-2 10-7 13z" fill="#aaa" stroke="none" /><circle cx="18" cy="20" r="4.500" fill="#f4693a" stroke="none" /></Tray24></TrayIcon>
          <TrayIcon $w={36} aria-label="Network"><Tray24><path d="M2 10c6-6 14-6 20 0M5 14c4-4 10-4 14 0M8.500 17.500c2-2 5-2 7 0" strokeWidth="3" /><path d="M9.500 20h5L12 23.500z" fill="#d3d3d3" stroke="none" /></Tray24></TrayIcon>
          <TrayIcon $w={34} aria-label="Battery"><Tray24><path d="M14 23H4V5h15v8" strokeWidth="2.500" /><path d="M8 1.500h7v4H8zM7 8h9v6l-5 6H7z" fill="#d3d3d3" stroke="none" /><path d="M17 13h3v4h3l-7 8v-5h-3z" fill="#d3d3d3" stroke="#393939" strokeWidth="1" /></Tray24></TrayIcon>
          <TrayIcon $w={24} aria-label="Volume"><Tray24><path d="M1 10h4l6-6v18l-6-6H1z" fill="#d3d3d3" stroke="none" /><path d="M14 9c2 3 2 5 0 8M17 6c4 5 4 9 0 14M20 3c5 7 5 13 0 20" /></Tray24></TrayIcon>
          <Clock><ClockTime>12:12 AM</ClockTime>2025-07-01</Clock>
          <Keyboard>ar</Keyboard>
        </Tray>
      </Panel>
      <Watermark>
        <WatermarkArabic>مستقل</WatermarkArabic>
        <WatermarkLatin>mostaql.com</WatermarkLatin>
      </Watermark>
      <Pointer width="20" height="27" viewBox="0 0 18 25" aria-hidden="true">
        <path d="M2 1.500v20l5-4 3 5 3-1.500-2.500-5.500 5.500-1z" fill="#000" stroke="#fff" strokeWidth="1.500" />
      </Pointer>
    </Window>
  );
}
